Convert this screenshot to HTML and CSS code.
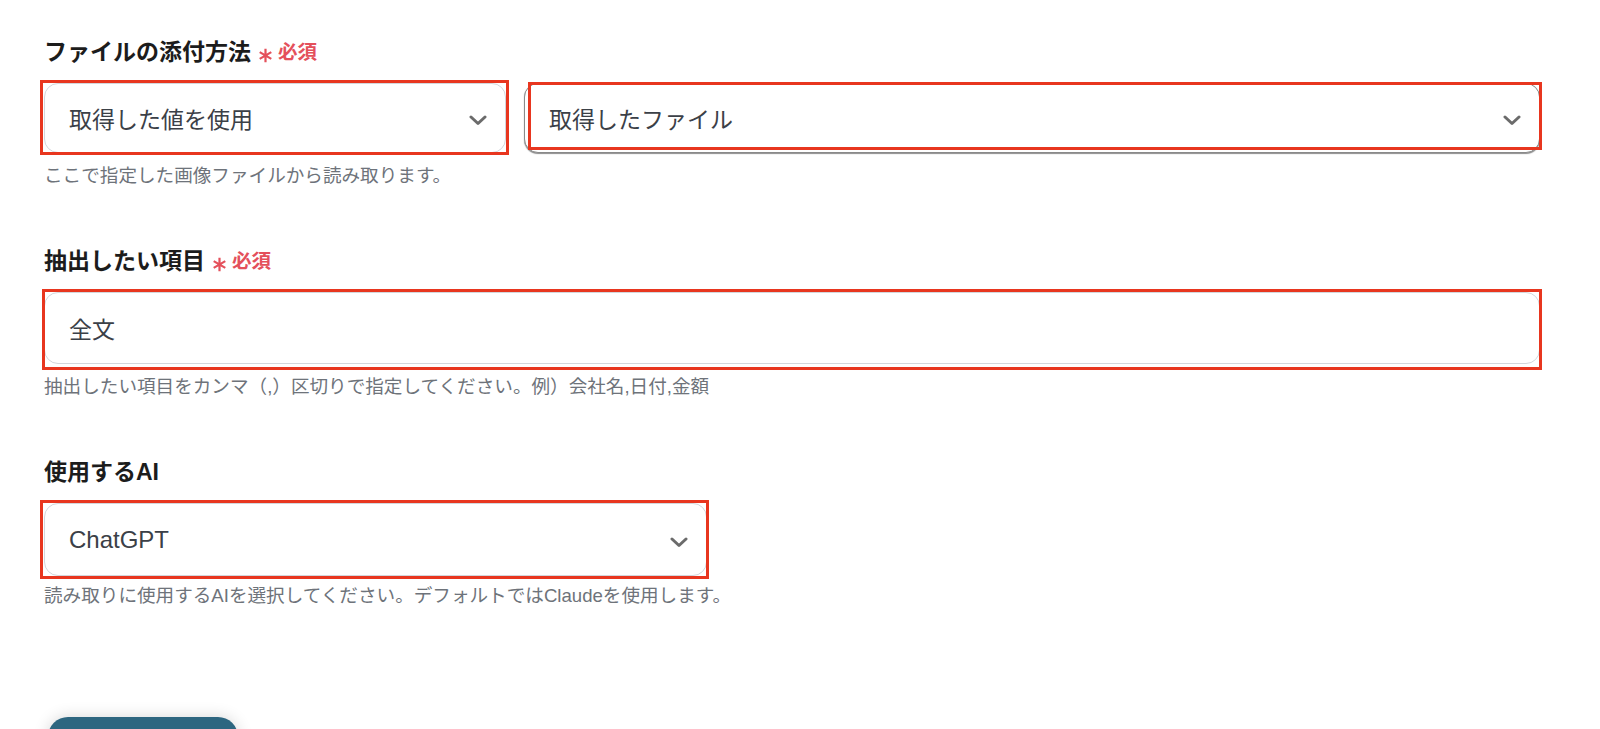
FILE: index.html
```html
<!DOCTYPE html>
<html lang="ja">
<head>
<meta charset="utf-8">
<title>設定</title>
<link rel="stylesheet" href="styles.css">
</head>
<body>
<main class="form">
  <section class="group">
    <div class="label">ファイルの添付方法<span class="req"><svg class="star" viewBox="0 0 15 15"><path d="M7.5 0.8V14.2M1.7 4.15L13.3 10.85M1.7 10.85L13.3 4.15"/></svg>必須</span></div>
    <div class="row">
      <div class="select select-first mark mark-a"><span class="value">取得した値を使用</span><svg class="chev" viewBox="0 0 18 11"><path d="M2 2L9 8.5L16 2"/></svg></div>
      <div class="select select-dark grow mark mark-b"><span class="value">取得したファイル</span><svg class="chev" viewBox="0 0 18 11"><path d="M2 2L9 8.5L16 2"/></svg></div>
    </div>
    <p class="help">ここで指定した画像ファイルから読み取ります。</p>
  </section>

  <section class="group">
    <div class="label">抽出したい項目<span class="req"><svg class="star" viewBox="0 0 15 15"><path d="M7.5 0.8V14.2M1.7 4.15L13.3 10.85M1.7 10.85L13.3 4.15"/></svg>必須</span></div>
    <div class="input mark mark-c"><span class="value">全文</span></div>
    <p class="help">抽出したい項目をカンマ（,）区切りで指定してください。例）会社名,日付,金額</p>
  </section>

  <section class="group">
    <div class="label">使用するAI</div>
    <div class="select select-ai mark mark-d"><span class="value">ChatGPT</span><svg class="chev" viewBox="0 0 18 11"><path d="M2 2L9 8.5L16 2"/></svg></div>
    <p class="help help-tight">読み取りに使用するAIを選択してください。デフォルトではClaudeを使用します。</p>
  </section>

  <button class="btn" type="button" aria-label="テスト"></button>
</main>
</body>
</html>
```

FILE: styles.css
```css
html, body {
  margin: 0;
  background: #ffffff;
}

body {
  font-family: "Liberation Sans", "Noto Sans CJK JP", sans-serif;
  overflow: hidden;
}

.form {
  padding: 36px 60px 0 44px;
}

.group + .group {
  margin-top: 57px;
}

.label {
  display: flex;
  align-items: center;
  font-size: 23px;
  font-weight: 700;
  line-height: 32px;
  color: #1c1c1c;
  margin-bottom: 15px;
}

.req {
  display: inline-flex;
  align-items: center;
  gap: 5px;
  margin-left: 7px;
  color: #e4505b;
  font-size: 19.5px;
  font-weight: 700;
}

.star {
  width: 15px;
  height: 15px;
  margin-top: 6px;
  fill: none;
  stroke: #e4505b;
  stroke-width: 2.2;
}

.row {
  display: flex;
  gap: 18px;
}

.select,
.input {
  position: relative;
  box-sizing: border-box;
  display: flex;
  align-items: center;
  justify-content: space-between;
  height: 70px;
  padding: 0 18px 0 24px;
  border: 1px solid #d3d7dc;
  border-radius: 14px;
  background: #ffffff;
  font-size: 23px;
  color: #3b4047;
}

.select-first {
  width: 462px;
  flex: none;
}

.grow {
  flex: 1;
}

.select-dark {
  border-color: #8a8a8a;
  box-shadow: 0 1px 1px rgba(0, 0, 0, 0.45);
}

.input {
  height: 72px;
}

.select-ai {
  width: 663px;
  height: 73px;
  font-size: 24px;
}

.chev {
  width: 18px;
  height: 11px;
  margin-top: 5px;
  fill: none;
  stroke: #6b6b6b;
  stroke-width: 3;
  stroke-linecap: round;
  stroke-linejoin: round;
}

/* red annotation frames drawn over the fields */
.mark::after {
  content: "";
  position: absolute;
  border: 3px solid #e8361f;
  pointer-events: none;
}

.mark-a::after {
  top: -4px;
  bottom: -3px;
  left: -5px;
  right: -4px;
}

.mark-b::after {
  top: -2px;
  bottom: 2px;
  left: 3px;
  right: -3px;
}

.mark-c::after {
  top: -4px;
  bottom: -7px;
  left: -3px;
  right: -3px;
}

.mark-d::after {
  top: -4px;
  bottom: -4px;
  left: -5px;
  right: -3px;
}

.help {
  margin: 11px 0 0;
  font-size: 18.6px;
  line-height: 24px;
  color: #6e737a;
}

.help-tight {
  margin-top: 8px;
}

.btn {
  display: block;
  margin: 109px 0 0 4px;
  width: 190px;
  height: 64px;
  border: none;
  border-radius: 20px;
  background: #2d6680;
  box-shadow: 0 0 16px rgba(0, 0, 0, 0.16);
}
```
